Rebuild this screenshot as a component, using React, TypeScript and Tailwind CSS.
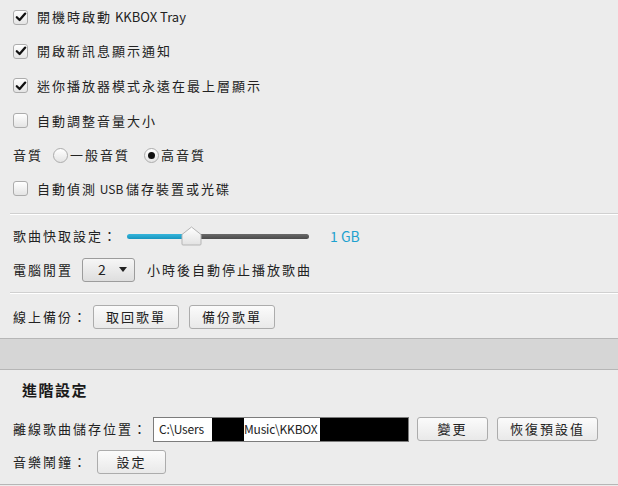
import React from "react";

const font = { fontFamily: '"Noto Sans CJK TC", "Noto Sans", sans-serif' };

function Check({ on }: { on: boolean }) {
  return (
    <span className="w-[15px] h-[15px] shrink-0 rounded-[3px] border border-[#acacac] bg-gradient-to-b from-white to-[#e4e4e4] flex items-center justify-center">
      {on && (
        <svg width="12" height="12" viewBox="0 0 12 12">
          <path d="M1.8 6.2 L4.6 9 L10.2 2.6" fill="none" stroke="#111" strokeWidth="2.3" strokeLinecap="round" strokeLinejoin="round" />
        </svg>
      )}
    </span>
  );
}

function Radio({ on }: { on: boolean }) {
  return (
    <span className="w-[15px] h-[15px] shrink-0 rounded-full border border-[#acacac] bg-gradient-to-b from-white to-[#e4e4e4] flex items-center justify-center">
      {on && <span className="w-[7px] h-[7px] rounded-full bg-[#111]" />}
    </span>
  );
}

function Btn({ label, w }: { label: string; w: string }) {
  return (
    <button className={`${w} h-[24px] shrink-0 rounded-[3px] border border-[#acacac] bg-gradient-to-b from-[#fbfbfb] to-[#e9e9e9] text-[13px] tracking-[2px] text-[#222] flex items-center justify-center whitespace-nowrap`}>
      {label}
    </button>
  );
}

function CheckRow({ on, h, children }: { on: boolean; h: string; children: React.ReactNode }) {
  return (
    <div className={`${h} flex items-center pl-[13px] gap-[9px]`}>
      <Check on={on} />
      <span className="whitespace-nowrap">{children}</span>
    </div>
  );
}

function Sep() {
  return <div className="ml-[10px] h-0 border-t border-[#d0d0d0] border-b border-b-white" />;
}

export default function App() {
  return (
    <div className="w-[618px] h-[486px] overflow-hidden bg-[#ececec] text-[13px] tracking-[2px] text-[#222]" style={font}>
      <CheckRow on h="h-[34px]">
        開機時啟動<span className="tracking-normal text-[13px]"> KKBOX Tray</span>
      </CheckRow>
      <CheckRow on h="h-[34px]">開啟新訊息顯示通知</CheckRow>
      <CheckRow on h="h-[35px]">迷你播放器模式永遠在最上層顯示</CheckRow>
      <CheckRow on={false} h="h-[35px]">自動調整音量大小</CheckRow>
      <div className="h-[34px] flex items-center pl-[13px] whitespace-nowrap">
        <span className="mr-[10px]">音質</span>
        <Radio on={false} />
        <span className="ml-[2px] mr-[14px]">一般音質</span>
        <Radio on />
        <span className="ml-[2px]">高音質</span>
      </div>
      <CheckRow on={false} h="h-[33px]">
        自動偵測<span className="tracking-normal text-[12px]"> USB </span>儲存裝置或光碟
      </CheckRow>

      <div className="h-[8px]" />
      <Sep />

      <div className="h-[4px]" />
      <div className="h-[34px] flex items-center pl-[13px]">
        <span className="w-[114px] shrink-0 whitespace-nowrap">歌曲快取設定：</span>
        <div className="relative w-[182px] h-[20px] flex items-center">
          <div className="flex w-full h-[5px] rounded-full overflow-hidden">
            <div className="w-[57px] bg-gradient-to-b from-[#35b6dc] to-[#1595bf]" />
            <div className="flex-1 bg-gradient-to-b from-[#6a6a6a] to-[#4a4a4a]" />
          </div>
          <svg className="absolute left-[54px] top-[0px]" width="21" height="20" viewBox="0 0 21 20">
            <defs>
              <linearGradient id="tg" x1="0" y1="0" x2="0" y2="1">
                <stop offset="0" stopColor="#ffffff" />
                <stop offset="1" stopColor="#e2e2e2" />
              </linearGradient>
            </defs>
            <path d="M10.5 1 L20 8.5 L20 18 Q20 19 19 19 L2 19 Q1 19 1 18 L1 8.5 Z" fill="url(#tg)" stroke="#b5b5b5" strokeWidth="1" />
          </svg>
        </div>
        <span className="ml-[21px] text-[#1ea2cf] tracking-normal text-[14px]">1 GB</span>
      </div>
      <div className="h-[33px] flex items-center pl-[13px]">
        <span className="w-[69px] shrink-0 whitespace-nowrap">電腦閒置</span>
        <div className="w-[53px] h-[24px] shrink-0 rounded-[3px] border border-[#9c9c9c] bg-gradient-to-b from-[#f6f6f6] to-[#dedede] flex items-center pl-[15px] pr-[7px] justify-between">
          <span className="tracking-normal text-[14px]">2</span>
          <svg width="8" height="5" viewBox="0 0 8 5">
            <path d="M0 0 L8 0 L4 5 Z" fill="#222" />
          </svg>
        </div>
        <span className="ml-[12px] whitespace-nowrap">小時後自動停止播放歌曲</span>
      </div>

      <div className="h-[6px]" />
      <Sep />

      <div className="h-[6px]" />
      <div className="h-[34px] flex items-center pl-[13px]">
        <span className="w-[80px] shrink-0 whitespace-nowrap">線上備份：</span>
        <Btn label="取回歌單" w="w-[86px]" />
        <span className="w-[10px]" />
        <Btn label="備份歌單" w="w-[86px]" />
      </div>

      <div className="h-[4px]" />
      <div className="h-[32px] bg-[#d6d6d6] border-y border-[#b6b6b6]" />

      <div className="h-[41px] flex items-center pl-[22px] text-[15px] font-bold tracking-[1.5px] text-[#1a1a1a]">進階設定</div>

      <div className="h-[36px] flex items-center pl-[13px]">
        <span className="w-[140px] shrink-0 whitespace-nowrap">離線歌曲儲存位置：</span>
        <div className="w-[256px] h-[25px] shrink-0 bg-white border border-[#7c7c7c] flex items-stretch text-[12px] tracking-[-0.2px] whitespace-nowrap overflow-hidden">
          <span className="pl-[5px] w-[58px] shrink-0 flex items-center">C:\Users</span>
          <span className="w-[32px] shrink-0 bg-black" />
          <span className="w-[76px] shrink-0 flex items-center">Music\KKBOX</span>
          <span className="flex-1 bg-black" />
        </div>
        <span className="w-[8px]" />
        <Btn label="變更" w="w-[71px]" />
        <span className="w-[9px]" />
        <Btn label="恢復預設值" w="w-[101px]" />
      </div>

      <div className="h-[30px] flex items-center pl-[13px]">
        <span className="w-[84px] shrink-0 whitespace-nowrap">音樂鬧鐘：</span>
        <Btn label="設定" w="w-[69px]" />
      </div>

      <div className="h-[7px]" />
      <div className="h-0 border-t border-[#b6b6b6]" />
    </div>
  );
}
